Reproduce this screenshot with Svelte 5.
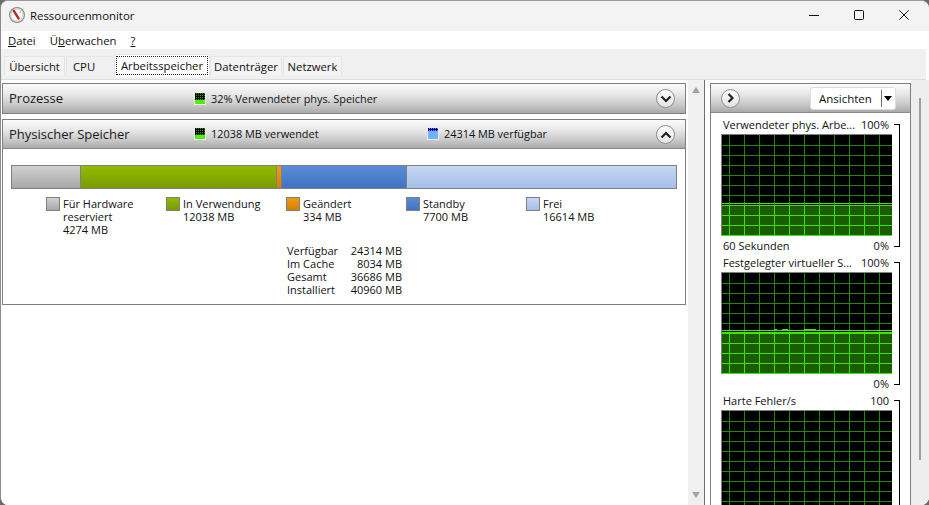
<script lang="ts">
  const tabs = ["Übersicht", "CPU", "Arbeitsspeicher", "Datenträger", "Netzwerk"];

  const legend = [
    { cls: "hw", lines: ["Für Hardware", "reserviert", "4274 MB"] },
    { cls: "used", lines: ["In Verwendung", "12038 MB"] },
    { cls: "mod", lines: ["Geändert", "334 MB"] },
    { cls: "standby", lines: ["Standby", "7700 MB"] },
    { cls: "free", lines: ["Frei", "16614 MB"] },
  ];

  const segments = [
    { cls: "hw", width: 69 },
    { cls: "used", width: 196 },
    { cls: "mod", width: 5 },
    { cls: "standby", width: 125 },
    { cls: "free", width: 269 },
  ];

  const stats = [
    ["Verfügbar", "24314 MB"],
    ["Im Cache", "8034 MB"],
    ["Gesamt", "36686 MB"],
    ["Installiert", "40960 MB"],
  ];

  const graphs = [
    { title: "Verwendeter phys. Arbe...", max: "100%", footL: "60 Sekunden", footR: "0%", fill: 70 },
    { title: "Festgelegter virtueller S...", max: "100%", footL: "", footR: "0%", fill: 59, blips: true },
    { title: "Harte Fehler/s", max: "100", footL: "", footR: "", fill: 0 },
  ];

  const vLines = Array.from({ length: 11 }, (_, i) => 7 + i * 15);
  const hLines = Array.from({ length: 10 }, (_, i) => 10.5 + i * 10);
</script>

<div class="window">
  <header class="titlebar">
    <svg class="app-icon" width="18" height="18" viewBox="0 0 18 18">
      <circle cx="9" cy="9" r="8" fill="#8d8a84" />
      <circle cx="9" cy="9" r="7" fill="#d9d6d0" />
      <circle cx="9" cy="9" r="5.4" fill="#fff" />
      <path d="M5.8 4.8 L10.6 12.4" stroke="#b3261e" stroke-width="2.4" stroke-linecap="round" />
      <path d="M12.5 5.5l-.8 1.5" stroke="#9a9a9a" stroke-width="1" />
    </svg>
    <span class="title">Ressourcenmonitor</span>
    <div class="caption">
      <svg width="10" height="10" viewBox="0 0 10 10"><path d="M0 5.5h10" stroke="#111" /></svg>
      <svg width="10" height="10" viewBox="0 0 10 10"><rect x=".5" y=".5" width="9" height="9" rx="1" fill="none" stroke="#111" /></svg>
      <svg width="10" height="10" viewBox="0 0 10 10"><path d="M.3.3l9.4 9.4M9.7.3L.3 9.7" stroke="#111" /></svg>
    </div>
  </header>

  <nav class="menubar">
    <span><u>D</u>atei</span>
    <span>Ü<u>b</u>erwachen</span>
    <span><u>?</u></span>
  </nav>

  <div class="tabstrip">
    {#each tabs as tab, i}
      <div class="tab tab-{i}" class:active={i === 2}><span>{tab}</span></div>
    {/each}
  </div>

  <main class="body">
    <section class="left">
      <div class="panel closed">
        <div class="panel-head">
          <h2>Prozesse</h2>
          <div class="meter-label first">
            <i class="meter green"></i>32% Verwendeter phys. Speicher
          </div>
          <button class="round" aria-label="Aufklappen">
            <svg width="12" height="8" viewBox="0 0 12 8"><path d="M1.5 1.5L6 6l4.5-4.5" fill="none" stroke="#222" stroke-width="2.2" /></svg>
          </button>
        </div>
      </div>

      <div class="panel">
        <div class="panel-head">
          <h2>Physischer Speicher</h2>
          <div class="meter-label first">
            <i class="meter green"></i>12038 MB verwendet
          </div>
          <div class="meter-label second">
            <i class="meter blue"></i>24314 MB verfügbar
          </div>
          <button class="round" aria-label="Zuklappen">
            <svg width="12" height="8" viewBox="0 0 12 8"><path d="M1.5 6.5L6 2l4.5 4.5" fill="none" stroke="#222" stroke-width="2.2" /></svg>
          </button>
        </div>

        <div class="panel-body">
          <div class="membar">
            {#each segments as seg}
              <div class="seg {seg.cls}" style="width: {seg.width}px"></div>
            {/each}
          </div>

          <div class="legend">
            {#each legend as item}
              <div class="legend-item">
                <i class="swatch {item.cls}"></i>
                <div>
                  {#each item.lines as line}<div>{line}</div>{/each}
                </div>
              </div>
            {/each}
          </div>

          <dl class="stats">
            {#each stats as row}
              <dt>{row[0]}</dt>
              <dd>{row[1]}</dd>
            {/each}
          </dl>
        </div>
      </div>
    </section>

    <div class="vscroll">
      <i class="arrow up"></i>
      <i class="arrow down"></i>
    </div>

    <aside class="right">
      <div class="right-head">
        <button class="round small" aria-label="Ausblenden">
          <svg width="8" height="10" viewBox="0 0 8 10"><path d="M1.5 1L5.5 5l-4 4" fill="none" stroke="#222" stroke-width="2.2" /></svg>
        </button>
        <div class="views">
          <span class="views-label">Ansichten</span>
          <i class="views-sep"></i>
          <i class="views-caret"></i>
        </div>
      </div>

      <div class="graphs">
        {#each graphs as g}
          <div class="graph-block">
            <div class="graph-col">
              <div class="graph-row"><span>{g.title}</span><span>{g.max}</span></div>
              <svg class="graph" width="170" height="101" viewBox="0 0 170 101">
                <rect width="170" height="101" fill="#000" />
                {#if g.fill}
                  <rect y={g.fill} width="170" height={101 - g.fill} fill="#1a5c00" />
                {/if}
                {#each vLines as x}
                  <path d="M{x}.5 0V101" stroke="#238a00" />
                  {#if g.fill}<path d="M{x}.5 {g.fill}V101" stroke="#3ee600" />{/if}
                {/each}
                {#each hLines as y}
                  <path d="M0 {y}H170" stroke={y > g.fill && g.fill ? "#3ee600" : "#238a00"} />
                {/each}
                {#if g.fill}
                  <path d="M0 {g.fill - 1.5}H170M0 {g.fill + 0.5}H170" stroke="#3ee600" />
                {/if}
                {#if g.blips}
                  <path d="M52 56.5h3M60 56.5h6M82 56.5h12" stroke="#3ee600" />
                {/if}
              </svg>
              {#if g.footL || g.footR}
                <div class="graph-row foot"><span>{g.footL}</span><span>{g.footR}</span></div>
              {/if}
            </div>
            <i class="bracket"></i>
          </div>
        {/each}
      </div>
    </aside>

    <div class="outer-scroll"><i></i></div>
  </main>
</div>

<style>
  :global(body) {
    margin: 0;
    background: #6d6a66;
    overflow: hidden;
  }

  .window {
    width: 929px;
    height: 505px;
    box-sizing: border-box;
    border-radius: 8px;
    border-left: 1px solid #8c8c8c;
    border-top: 1px solid #9a9a9a;
    background: #fff;
    display: flex;
    flex-direction: column;
    overflow: hidden;
    font-family: "Open Sans", "Noto Sans", sans-serif;
    font-size: 11px;
    color: #111;
  }

  .titlebar {
    height: 30px;
    flex: none;
    box-sizing: border-box;
    background: #f3f3f3;
    display: flex;
    align-items: center;
    padding: 0 0 2px 7px;
  }

  .app-icon {
    margin-right: 4px;
  }

  .title {
    font-size: 11.4px;
  }

  .caption {
    margin-left: auto;
    display: flex;
    gap: 35px;
    padding-right: 20px;
  }

  .menubar {
    height: 18px;
    flex: none;
    background: #fff;
    display: flex;
    align-items: center;
    gap: 14px;
    padding-left: 7px;
    font-size: 11.3px;
  }

  .tabstrip {
    height: 31px;
    flex: none;
    box-sizing: border-box;
    background: #f0f0f0;
    border-bottom: 1px solid #dcdcdc;
    display: flex;
    align-items: flex-end;
    padding: 0 0 3px 3px;
    margin-right: 3px;
    font-size: 11.3px;
  }

  .tab {
    height: 20px;
    box-sizing: border-box;
    background: #f3f3f3;
    border: 1px solid #e6e6e6;
    border-bottom: 0;
    display: flex;
    align-items: center;
    justify-content: center;
    margin-right: 1px;
  }

  .tab-0 { width: 61px; }
  .tab-1 { width: 47px; background: #f0f0f0; justify-content: flex-start; padding-left: 6px; border-right: 0; }
  .tab-3 { width: 72px; }
  .tab-4 { width: 59px; }

  .tab.active {
    width: 96px;
    height: 23px;
    background: #fff;
    margin-right: 0;
    margin-bottom: -1px;
    align-self: flex-end;
    padding: 2px 2px 3px;
  }

  .tab.active span {
    display: flex;
    align-items: center;
    justify-content: center;
    width: 100%;
    height: 100%;
    outline: 1px dotted #222;
  }

  .body {
    flex: 1;
    min-height: 0;
    display: flex;
    padding-top: 3px;
    background: #fff;
  }

  .left {
    width: 685px;
    flex: none;
    box-sizing: border-box;
    padding-left: 1px;
    display: flex;
    flex-direction: column;
    gap: 5px;
  }

  .panel {
    border: 1px solid #7f7f7f;
    background: #fff;
  }

  .panel-head {
    height: 29px;
    box-sizing: border-box;
    position: relative;
    display: flex;
    align-items: center;
    padding: 0 0 1px 6px;
    background: linear-gradient(#fbfbfb, #e8e8e8 35%, #c6c6c6 75%, #a9a9a9);
    border-bottom: 1px solid #8a8a8a;
  }

  .closed .panel-head {
    border-bottom: 0;
  }

  .panel-head h2 {
    margin: 0;
    font-size: 13px;
    font-weight: 400;
    width: 185px;
    flex: none;
    color: #1a1a1a;
  }

  .meter-label {
    display: flex;
    align-items: center;
    font-size: 10.9px;
    color: #111;
  }

  .meter-label.first {
    flex: none;
    width: 233px;
  }

  .meter {
    width: 12px;
    height: 13px;
    box-sizing: border-box;
    border: 1px solid #eee;
    margin-right: 5px;
    flex: none;
    display: block;
  }

  .meter::before {
    content: "";
    display: block;
    background-size: 2px 2px;
  }

  .meter.green {
    background: #4ff000;
  }

  .meter.green::before {
    height: 7px;
    background-color: #000;
    background-image: repeating-conic-gradient(#2aa000 0 25%, #000 0 100%);
  }

  .meter.blue {
    background: #6db4ff;
  }

  .meter.blue::before {
    height: 3px;
    background-color: #0a0a90;
    background-image: repeating-conic-gradient(#8080ff 0 25%, #000090 0 100%);
  }

  .round {
    position: absolute;
    right: 10px;
    top: 5px;
    width: 19px;
    height: 19px;
    padding: 0;
    border-radius: 50%;
    border: 1px solid #8e8e8e;
    background: linear-gradient(#fff, #e4e4e4);
    display: flex;
    align-items: center;
    justify-content: center;
  }

  .panel-body {
    height: 155px;
    box-sizing: border-box;
    padding: 16px 8px 0;
  }

  .membar {
    display: flex;
    height: 24px;
    width: 666px;
    box-sizing: border-box;
    border: 1px solid #808080;
  }

  .seg {
    flex: none;
    height: 100%;
    box-sizing: border-box;
    border-right: 1px solid #808080;
  }

  .seg:last-child {
    border-right: 0;
    flex: 1;
  }

  .hw { background: linear-gradient(#d0d0d0, #a8a8a8); }
  .used { background: linear-gradient(#92ba00, #7a9c00); }
  .mod { background: linear-gradient(#ef9a12, #d67f00); }
  .standby { background: linear-gradient(#5b8bd6, #3f74c4); }
  .free { background: linear-gradient(#c6d7f2, #a3c0e8); }

  .legend {
    display: flex;
    padding: 8px 0 0 35px;
  }

  .legend-item {
    width: 120px;
    flex: none;
    display: flex;
    gap: 3px;
    line-height: 13px;
    font-size: 11px;
  }

  .swatch {
    width: 14px;
    height: 14px;
    box-sizing: border-box;
    border: 1px solid #808080;
    flex: none;
  }

  .stats {
    margin: 8px 0 0 276px;
    display: grid;
    grid-template-columns: 58px 57px;
    line-height: 13px;
    width: 115px;
    position: relative;
  }

  .stats dt, .stats dd {
    margin: 0;
  }

  .stats dd {
    text-align: right;
  }

  .vscroll {
    width: 17px;
    margin-left: 2px;
    flex: none;
    background: #f0f0f0;
    margin-top: -3px;
    display: flex;
    flex-direction: column;
    justify-content: space-between;
    align-items: center;
    padding: 7px 1px 7px 0;
    box-sizing: border-box;
    border-right: 1px solid #707070;
  }

  .arrow {
    width: 0;
    height: 0;
    border-left: 4px solid transparent;
    border-right: 4px solid transparent;
  }

  .arrow.up { border-bottom: 6px solid #a3a3a3; }
  .arrow.down { border-top: 6px solid #a3a3a3; }

  .right {
    width: 201px;
    flex: none;
    margin-left: 5px;
    box-sizing: border-box;
    border: 1px solid #7f7f7f;
    border-bottom: 0;
    background: #fff;
  }

  .right-head {
    height: 29px;
    box-sizing: border-box;
    position: relative;
    display: flex;
    align-items: center;
    padding: 0 12px 0 10px;
    background: linear-gradient(#fbfbfb, #e8e8e8 35%, #c6c6c6 75%, #a9a9a9);
    border-bottom: 1px solid #8a8a8a;
  }

  .round.small {
    position: static;
  }

  .views {
    margin-left: auto;
    width: 86px;
    height: 23px;
    box-sizing: border-box;
    background: #fff;
    border: 1px solid #dedede;
    border-radius: 3px;
    display: flex;
    align-items: center;
    font-size: 11.5px;
    padding-left: 8px;
    margin-right: 2px;
  }

  .views-sep {
    width: 1px;
    height: 17px;
    background: #707070;
    margin-left: 9px;
  }

  .views-caret {
    margin-left: 2px;
    width: 0;
    height: 0;
    border-left: 4.5px solid transparent;
    border-right: 4.5px solid transparent;
    border-top: 5px solid #000;
  }

  .graphs {
    display: flex;
    flex-direction: column;
    padding: 3px 0 0 10px;
  }

  .graph-block {
    display: flex;
    position: relative;
  }

  .graph-col {
    width: 171px;
    flex: none;
  }

  .graph-row {
    display: flex;
    justify-content: space-between;
    line-height: 18px;
    height: 18px;
    font-size: 11px;
    padding: 0 3px 0 2px;
    white-space: nowrap;
  }

  .graph-row.foot {
    line-height: 20px;
  }

  .graph {
    display: block;
    border-top: 1px solid #808080;
    border-left: 1px solid #808080;
  }

  .bracket {
    position: absolute;
    left: 173px;
    top: 8px;
    bottom: 7px;
    width: 5px;
    border: 1px solid #000;
    border-left: 0;
  }

  .graph-block:last-child .bracket {
    bottom: -60px;
    border-bottom: 0;
  }

  .outer-scroll {
    flex: 1;
    background: #eeeeee;
    margin-top: -3px;
    position: relative;
    border-bottom-right-radius: 8px;
  }

  .outer-scroll i {
    position: absolute;
    left: 8px;
    top: 18px;
    bottom: 45px;
    width: 2px;
    background: #a0a0a0;
  }
</style>
